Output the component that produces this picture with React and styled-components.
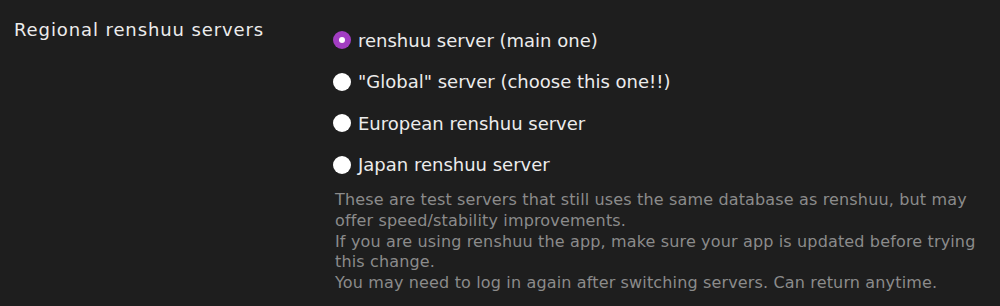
import React, { useState } from 'react';
import styled, { createGlobalStyle } from 'styled-components';

const GlobalStyle = createGlobalStyle`
  html, body {
    margin: 0;
    padding: 0;
    background-color: #1e1e1e;
  }
  body {
    font-family: "DejaVu Sans", "Noto Sans", sans-serif;
  }
`;

const servers = [
  { id: 'main', label: 'renshuu server (main one)' },
  { id: 'global', label: '"Global" server (choose this one!!)' },
  { id: 'eu', label: 'European renshuu server' },
  { id: 'jp', label: 'Japan renshuu server' },
];

function App() {
  const [selected, setSelected] = useState('main');

  return (
    <>
      <GlobalStyle />
      <Container>
        <Label>Regional renshuu servers</Label>
        <Options>
          {servers.map((s) => (
            <Option key={s.id} onClick={() => setSelected(s.id)}>
              <Radio checked={selected === s.id} />
              <span>{s.label}</span>
            </Option>
          ))}
          <Note>
            These are test servers that still uses the same database as renshuu, but may offer speed/stability improvements.
            <br />
            If you are using renshuu the app, make sure your app is updated before trying this change.
            <br />
            You may need to log in again after switching servers. Can return anytime.
          </Note>
        </Options>
      </Container>
    </>
  );
}

export default App;

const Container = styled.div`
  width: 1000px;
  height: 306px;
  box-sizing: border-box;
  display: flex;
  padding: 14px 0 0 14px;
  overflow: hidden;
`;

const Label = styled.div`
  width: 319px;
  flex-shrink: 0;
  padding-top: 1.5px;
  font-size: 18px;
  letter-spacing: 0.9px;
  line-height: 28px;
  color: #ececec;
`;

const Options = styled.div`
  display: flex;
  flex-direction: column;
  padding-top: 12px;
`;

const Option = styled.label`
  display: flex;
  align-items: center;
  flex-shrink: 0;
  gap: 7px;
  height: 28px;
  margin-bottom: 13.5px;
  font-size: 18px;
  color: #ececec;
  cursor: pointer;
`;

const Radio = styled.span`
  width: 18px;
  height: 18px;
  border-radius: 50%;
  flex-shrink: 0;
  box-sizing: border-box;
  background: ${(p) => (p.checked ? '#a23dc2' : '#ffffff')};
  position: relative;

  &::after {
    content: '';
    display: ${(p) => (p.checked ? 'block' : 'none')};
    position: absolute;
    left: 6px;
    top: 6px;
    width: 6px;
    height: 6px;
    border-radius: 50%;
    background: #ffffff;
  }
`;

const Note = styled.div`
  width: 645px;
  flex-shrink: 0;
  margin-top: -2px;
  padding-left: 2px;
  font-size: 16px;
  letter-spacing: 0.15px;
  line-height: 20.8px;
  color: #8b8b8b;
`;
